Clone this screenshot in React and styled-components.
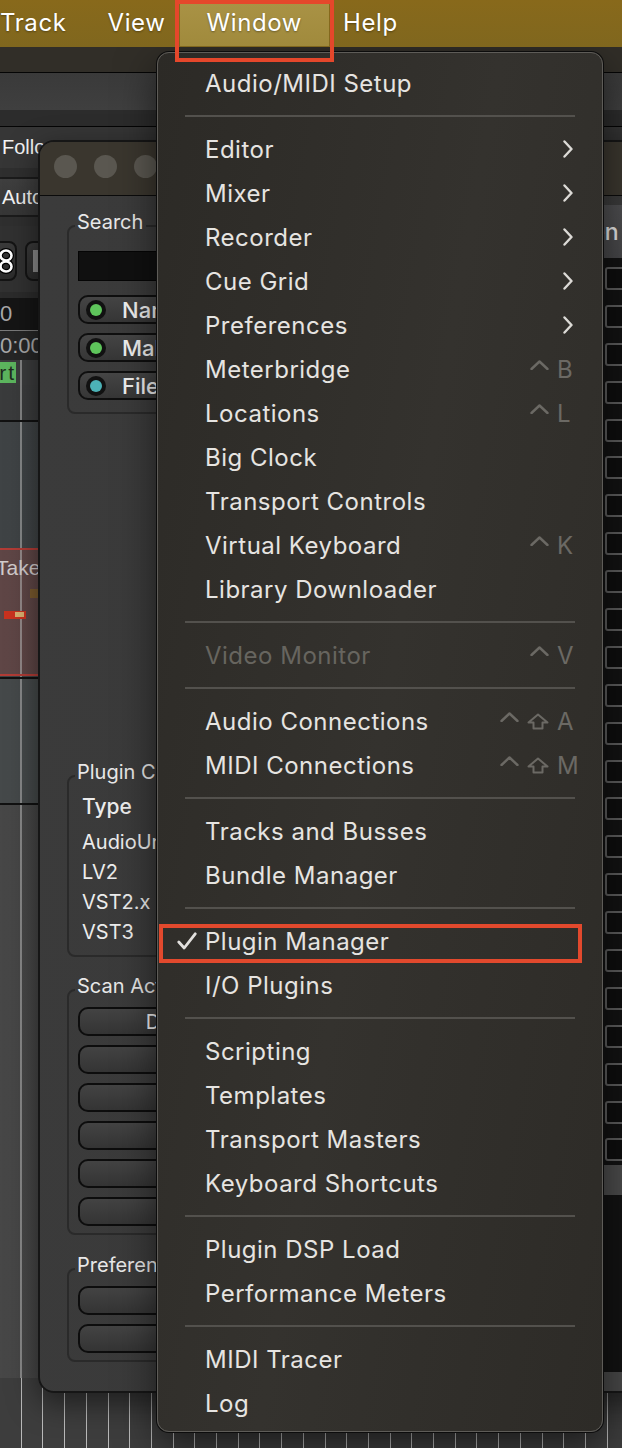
import React from 'react';
import styled, { createGlobalStyle, css } from 'styled-components';

const FONT = `Inter, "Noto Sans", "Liberation Sans", sans-serif`;
const GTK = `"Liberation Sans", Arial, sans-serif`;

const Global = createGlobalStyle`
  html, body { margin: 0; padding: 0; background: #2b2a28; }
  body { font-family: ${FONT}; -webkit-font-smoothing: antialiased; }
  * { box-sizing: border-box; }
`;

const Screen = styled.div`
  width: 622px;
  height: 1448px;
  position: relative;
  overflow: hidden;
  display: flex;
  flex-direction: column;
  background: #3a3a3a;
`;

/* ---------- macOS menu bar ---------- */
const MenuBar = styled.div`
  height: 47px;
  flex: none;
  display: flex;
  align-items: stretch;
  background: linear-gradient(#88691b, #80671e);
  position: relative;
  z-index: 3;
`;

const MenuTitle = styled.div`
  position: relative;
  display: flex;
  align-items: center;
  padding: 0 20px 3px 21px;
  font-size: 24px;
  letter-spacing: 0.6px;
  color: #fff;
  text-shadow: 0 1px 2px rgba(0, 0, 0, 0.35);
  &:first-child { margin-left: -21px; }
  ${(p) =>
    p.$active &&
    css`
      &::before {
        content: '';
        position: absolute;
        left: -6px;
        right: -7px;
        top: 3px;
        bottom: 1px;
        background: linear-gradient(#a99245, #a08a3c);
        z-index: -1;
      }
      &::after {
        content: '';
        position: absolute;
        left: -11px;
        right: -12px;
        top: 0;
        height: 54px;
        border: 4px solid #e5472b;
      }
    `}
`;

/* ---------- workspace / editor background ---------- */
const Workspace = styled.div`
  flex: 1;
  position: relative;
  display: flex;
  flex-direction: column;
`;

const vline = `linear-gradient(90deg, transparent 20px, rgba(190,190,190,.55) 20px 22px, transparent 22px)`;

const Strip = styled.div`
  flex: none;
  height: ${(p) => p.$h}px;
  background: ${(p) => p.$bg};
  border-bottom: ${(p) => (p.$line ? `${p.$line}px solid #050505` : 'none')};
  display: flex;
  align-items: center;
  overflow: hidden;
  color: #f4f4f4;
`;

const ToolText = styled.span`
  font-family: ${GTK};
  font-size: 20px;
  margin-left: 2px;
  white-space: nowrap;
`;

const AutoButton = styled.div`
  height: 40px;
  margin-left: -8px;
  padding: 0 12px 0 8px;
  display: flex;
  align-items: center;
  border: 2px solid #1b1b1b;
  border-radius: 6px;
  background: linear-gradient(#3f3f3f, #363636);
  font-family: ${GTK};
  font-size: 20px;
  white-space: nowrap;
`;

const ToolRow = styled.div`
  flex: none;
  height: 66px;
  background: #313131;
  display: flex;
  align-items: center;
  gap: 8px;
  padding-top: 4px;
`;

const IconBtn = styled.div`
  height: 40px;
  width: ${(p) => p.$w}px;
  margin-left: ${(p) => p.$ml || 0}px;
  border: 2px solid #141414;
  border-radius: 8px;
  background: linear-gradient(#3a3a3a, #2c2c2c);
  display: flex;
  align-items: center;
  justify-content: ${(p) => p.$justify || 'center'};
  padding: 0 ${(p) => p.$pad ?? 6}px;
  flex: none;
`;

const ClockRow = styled.div`
  flex: none;
  height: ${(p) => p.$h}px;
  background: ${(p) => p.$bg};
  border-top: ${(p) => (p.$top ? `1px solid ${p.$top}` : 'none')};
  color: #a8a8a8;
  font-family: ${GTK};
  font-size: 22px;
  display: flex;
  align-items: center;
  padding-top: ${(p) => p.$pt || 0}px;
  overflow: hidden;
  white-space: nowrap;
`;

const Canvas = styled.div`
  flex: 1;
  display: flex;
  flex-direction: column;
  overflow: hidden;
`;

const MarkerRow = styled.div`
  flex: none;
  height: 25px;
  background: ${vline}, #3b3c3d;
  display: flex;
  align-items: center;
`;

const Chip = styled.div`
  margin-left: -40px;
  width: 56px;
  height: 21px;
  background: #5cb55e;
  color: #1f2a1f;
  font-family: ${GTK};
  font-size: 21px;
  line-height: 21px;
  letter-spacing: 2px;
  text-align: right;
  padding-right: 0;
  overflow: hidden;
`;

const Track = styled.div`
  flex: ${(p) => (p.$grow ? 1 : 'none')};
  height: ${(p) => (p.$h ? `${p.$h}px` : 'auto')};
  background: ${vline}, ${(p) => p.$bg};
  border-bottom: ${(p) => (p.$line ? '2px solid #111' : 'none')};
  padding-top: ${(p) => p.$pt || 0}px;
  display: flex;
  flex-direction: column;
`;

const Region = styled.div`
  height: 128px;
  border-top: 2px solid #b23c36;
  border-bottom: 2px solid #b23c36;
  background: ${vline}, linear-gradient(90deg, #5f4646, #4e3d3d);
  display: flex;
  flex-direction: column;
  overflow: hidden;
`;

const RegionName = styled.div`
  margin: 6px 0 0 -4px;
  font-family: ${GTK};
  font-size: 21px;
  line-height: 24px;
  color: #d2cccc;
`;

const Stripes = styled.div`
  flex: none;
  height: 70px;
  background: repeating-linear-gradient(90deg, transparent 0 20.7px, #b9b9b9 20.7px 21.7px), #3d3d3d;
`;

/* ---------- Plugin manager dialog ---------- */
const Dialog = styled.section`
  position: absolute;
  left: 38px;
  top: 93px;
  width: 680px;
  height: 1253px;
  border: 2px solid #161616;
  border-radius: 16px;
  overflow: hidden;
  display: flex;
  flex-direction: column;
  background: linear-gradient(100deg, #3b3b3b, #3a3a3a 60%, #383838);
  box-shadow: 0 10px 30px rgba(0, 0, 0, 0.5);
  z-index: 1;
`;

const TitleBar = styled.div`
  height: 54px;
  flex: none;
  background: #3a362e;
  border-bottom: 1px solid #0b0b0b;
  display: flex;
  align-items: center;
  gap: 17px;
  padding: 0 0 5px 14px;
`;

const Light = styled.span`
  width: 23px;
  height: 23px;
  border-radius: 50%;
  background: #5a5750;
`;

const DialogBody = styled.div`
  flex: 1;
  display: grid;
  grid-template-columns: 500px 1fr;
  min-height: 0;
`;

const LeftPanel = styled.div`
  padding: 14px 0 0 27px;
  display: flex;
  flex-direction: column;
`;

const Frame = styled.fieldset`
  margin: ${(p) => p.$mt || 0}px 0 0;
  padding: ${(p) => p.$pt}px 0 ${(p) => p.$pb}px 9px;
  border: 2px solid #2a2a2a;
  border-radius: 8px;
  width: 470px;
  min-inline-size: 0;
  display: flex;
  flex-direction: column;
`;

const Legend = styled.legend`
  margin-left: -3px;
  padding: 0 3px 8px 2px;
  font-size: 20px;
  line-height: 24px;
  color: #e8e8e8;
`;

const SearchInput = styled.div`
  height: 30px;
  width: 440px;
  background: #101010;
  border: 1px solid #050505;
  margin-bottom: 14px;
`;

const Toggle = styled.div`
  height: 29px;
  width: 440px;
  margin-bottom: ${(p) => (p.$last ? 0 : 9)}px;
  border: 2px solid #0f0f0f;
  border-radius: 10px;
  background: linear-gradient(#454545, #363636);
  display: flex;
  align-items: center;
  padding-left: 6px;
  gap: 16px;
  color: #f0f0f0;
  font-size: 22px;
  font-weight: 500;
`;

const Led = styled.span`
  width: 20px;
  height: 20px;
  border-radius: 50%;
  background: #111;
  display: flex;
  align-items: center;
  justify-content: center;
  flex: none;
  &::after {
    content: '';
    width: 12px;
    height: 12px;
    border-radius: 50%;
    background: ${(p) => p.$color};
  }
`;

const CountHead = styled.div`
  margin: 3px 0 8px 4px;
  font-size: 21px;
  font-weight: 500;
  line-height: 24px;
  color: #ececec;
`;

const CountRow = styled.div`
  margin-left: 4px;
  font-size: 20px;
  line-height: 30px;
  color: #ececec;
`;

const PanelButton = styled.div`
  height: 29px;
  width: ${(p) => p.$w || 440}px;
  margin-bottom: ${(p) => (p.$last ? 0 : 9)}px;
  border: 2px solid #0d0d0d;
  border-radius: 10px;
  background: linear-gradient(#434343, #343434);
  display: flex;
  align-items: center;
  justify-content: center;
  color: #f0f0f0;
  font-size: 20px;
  white-space: nowrap;
`;

const RightPanel = styled.div`
  padding-top: 9px;
  display: flex;
  flex-direction: column;
  min-height: 0;
`;

const TableHead = styled.div`
  height: 53px;
  flex: none;
  background: linear-gradient(#4d4d4f, #464648);
  display: flex;
  align-items: center;
  padding-left: 0;
  font-size: 23px;
  font-weight: 500;
  color: #e2e2e2;
  white-space: nowrap;
`;

const TableBody = styled.div`
  height: 907px;
  flex: none;
  background: #121212;
  overflow: hidden;
`;

const TableRow = styled.div`
  height: 37.9px;
  padding: 9px 0 0 65px;
`;

const CheckBox = styled.div`
  width: 26px;
  height: 23px;
  border: 2px solid #5b5b5b;
  border-radius: 3px;
  background: #0e0e0e;
`;

const Footer = styled.div`
  height: ${(p) => p.$h}px;
  flex: ${(p) => (p.$grow ? 1 : 'none')};
  background: ${(p) => p.$bg};
`;

/* ---------- Window menu ---------- */
const Menu = styled.nav`
  position: absolute;
  left: 157px;
  top: 5px;
  width: 446px;
  height: 1380px;
  border-radius: 12px;
  border: 1px solid #5e5c58;
  box-shadow: 0 0 0 1px #0c0c0c, 0 14px 40px rgba(0, 0, 0, 0.55);
  background: linear-gradient(100deg, #2c2a26 0%, #34322e 50%, #2d2b27 100%);
  padding: 8px 0 6px;
  display: flex;
  flex-direction: column;
  z-index: 2;
`;

const Item = styled.div`
  position: relative;
  height: 44px;
  flex: none;
  display: flex;
  align-items: center;
  padding-right: 23px;
  font-size: 24px;
  letter-spacing: 0.5px;
  color: ${(p) => (p.$disabled ? '#67655f' : '#e6e4e1')};
  white-space: nowrap;
  ${(p) =>
    p.$marked &&
    css`
      &::after {
        content: '';
        position: absolute;
        left: 1px;
        right: 20px;
        top: 5px;
        bottom: 0;
        border: 4px solid #e2492d;
      }
    `}
`;

const CheckSlot = styled.span`
  width: 47px;
  flex: none;
  display: flex;
  align-items: center;
  padding-left: 19px;
`;

const ItemLabel = styled.span`
  flex: 1;
`;

const Shortcut = styled.span`
  display: flex;
  align-items: center;
  gap: 8px;
  color: #6b6964;
`;

const KeyLetter = styled.span`
  min-width: 22px;
  font-size: 24px;
  letter-spacing: 0;
`;

const Caret = styled.svg`
  margin-bottom: 9px;
`;

const Separator = styled.div`
  height: 22px;
  flex: none;
  display: flex;
  align-items: center;
  padding: 0 27px;
  &::after {
    content: '';
    flex: 1;
    height: 2px;
    background: #53514d;
  }
`;

const CaretIcon = () => (
  <Caret width="19" height="10" viewBox="0 0 19 10" fill="none">
    <path d="M1.5 9 L9.5 1.5 L17.5 9" stroke="currentColor" strokeWidth="2.4" strokeLinecap="round" strokeLinejoin="round" />
  </Caret>
);

const ShiftIcon = () => (
  <svg width="22" height="17" viewBox="0 0 22 17" fill="none">
    <path d="M11 1.5 L20.5 9.5 L15.5 9.5 L15.5 15.5 L6.5 15.5 L6.5 9.5 L1.5 9.5 Z" stroke="currentColor" strokeWidth="2" strokeLinejoin="round" />
  </svg>
);

const Chevron = () => (
  <svg width="10" height="18" viewBox="0 0 10 18" fill="none" style={{ marginRight: 6 }}>
    <path d="M1.5 1.5 L8.5 9 L1.5 16.5" stroke="#dcdad6" strokeWidth="2.4" strokeLinecap="round" strokeLinejoin="round" />
  </svg>
);

const CheckMark = () => (
  <svg width="20" height="18" viewBox="0 0 20 18" fill="none">
    <path d="M1.8 10 L7.2 16 L18.2 1.8" stroke="#e2e0dd" strokeWidth="2.8" strokeLinecap="round" strokeLinejoin="round" />
  </svg>
);

const MENU = [
  { label: 'Audio/MIDI Setup' },
  'sep',
  { label: 'Editor', sub: true },
  { label: 'Mixer', sub: true },
  { label: 'Recorder', sub: true },
  { label: 'Cue Grid', sub: true },
  { label: 'Preferences', sub: true },
  { label: 'Meterbridge', key: 'B' },
  { label: 'Locations', key: 'L' },
  { label: 'Big Clock' },
  { label: 'Transport Controls' },
  { label: 'Virtual Keyboard', key: 'K' },
  { label: 'Library Downloader' },
  'sep',
  { label: 'Video Monitor', key: 'V', disabled: true },
  'sep',
  { label: 'Audio Connections', key: 'A', shift: true },
  { label: 'MIDI Connections', key: 'M', shift: true },
  'sep',
  { label: 'Tracks and Busses' },
  { label: 'Bundle Manager' },
  'sep',
  { label: 'Plugin Manager', checked: true, marked: true },
  { label: 'I/O Plugins' },
  'sep',
  { label: 'Scripting' },
  { label: 'Templates' },
  { label: 'Transport Masters' },
  { label: 'Keyboard Shortcuts' },
  'sep',
  { label: 'Plugin DSP Load' },
  { label: 'Performance Meters' },
  'sep',
  { label: 'MIDI Tracer' },
  { label: 'Log' },
];

export default function App() {
  return (
    <>
      <Global />
      <Screen>
        <MenuBar>
          <MenuTitle>Track</MenuTitle>
          <MenuTitle>View</MenuTitle>
          <MenuTitle $active>Window</MenuTitle>
          <MenuTitle>Help</MenuTitle>
        </MenuBar>

        <Workspace>
          <Strip $h={26} $bg="#312e28" $line={1} />
          <Strip $h={37} $bg="linear-gradient(#3a3a3a, #3f3f3f)" />
          <Strip $h={17} $bg="#2c2c2c" $line={1} />
          <Strip $h={41} $bg="#363636" $line={0}>
            <ToolText>Follow</ToolText>
          </Strip>
          <Strip $h={58} $bg="#2f2f2f">
            <AutoButton>Automation</AutoButton>
          </Strip>
          <ToolRow>
            <IconBtn $w={52} $ml={-35} $justify="flex-end" $pad={1}>
              <svg width="16" height="26" viewBox="0 0 16 26" fill="none">
                <ellipse cx="8" cy="7.5" rx="5.5" ry="5" stroke="#000" strokeWidth="5" />
                <ellipse cx="8" cy="18.5" rx="5.5" ry="5" stroke="#000" strokeWidth="5" />
                <ellipse cx="8" cy="7.5" rx="5.5" ry="5" stroke="#fff" strokeWidth="2.6" />
                <ellipse cx="8" cy="18.5" rx="5.5" ry="5" stroke="#fff" strokeWidth="2.6" />
              </svg>
            </IconBtn>
            <IconBtn $w={40} $justify="flex-start">
              <svg width="6" height="22" viewBox="0 0 6 22">
                <rect x="0" y="0" width="5" height="22" fill="#8a8a8a" />
              </svg>
            </IconBtn>
          </ToolRow>
          <ClockRow $h={38} $pt={6} $bg="linear-gradient(#2b2b2b 0 6px, #151515 6px)">
            <span>0</span>
          </ClockRow>
          <ClockRow $h={30} $bg="#262626" $top="#7a7a7a">
            <span>0:00:00</span>
          </ClockRow>
          <Canvas>
            <MarkerRow>
              <Chip>Start</Chip>
            </MarkerRow>
            <Track $h={37} $bg="linear-gradient(90deg,#3a3b3c,#3e3f40)" $line />
            <Track $h={257} $bg="linear-gradient(90deg,#3f4345,#45494c)" $pt={126} $line>
              <Region>
                <RegionName>Take1</RegionName>
                <svg width="40" height="40" viewBox="0 0 40 40">
                  <rect x="30" y="9" width="8" height="9" fill="#7a5a2e" />
                  <rect x="4" y="31" width="22" height="8" fill="#c9321f" />
                  <rect x="15" y="32" width="9" height="5" fill="#d8b070" />
                </svg>
              </Region>
            </Track>
            <Track $h={126} $bg="linear-gradient(90deg,#45494a,#4a4c4e)" $line />
            <Track $grow $bg="linear-gradient(90deg,#474747,#3d3d3d)" />
            <Stripes />
          </Canvas>

          <Dialog>
            <TitleBar>
              <Light />
              <Light />
              <Light />
            </TitleBar>
            <DialogBody>
              <LeftPanel>
                <Frame $pt={9} $pb={12}>
                  <Legend>Search</Legend>
                  <SearchInput />
                  <Toggle>
                    <Led $color="#5ec55b" />
                    Name
                  </Toggle>
                  <Toggle>
                    <Led $color="#5ec55b" />
                    Maker
                  </Toggle>
                  <Toggle $last>
                    <Led $color="#4cb2b6" />
                    File Path
                  </Toggle>
                </Frame>

                <Frame $mt={346} $pt={0} $pb={8}>
                  <Legend>Plugin Count</Legend>
                  <CountHead>Type</CountHead>
                  <CountRow>AudioUnit</CountRow>
                  <CountRow>LV2</CountRow>
                  <CountRow>VST2.x</CountRow>
                  <CountRow>VST3</CountRow>
                </Frame>

                <Frame $mt={17} $pt={1} $pb={7}>
                  <Legend>Scan Actions</Legend>
                  <PanelButton $w={423}>Discover new/updated Plugins</PanelButton>
                  <PanelButton />
                  <PanelButton />
                  <PanelButton />
                  <PanelButton />
                  <PanelButton $last />
                </Frame>

                <Frame $mt={18} $pt={1} $pb={7}>
                  <Legend>Preferences</Legend>
                  <PanelButton />
                  <PanelButton $last />
                </Frame>
              </LeftPanel>

              <RightPanel>
                <TableHead>Hidden</TableHead>
                <TableBody>
                  {Array.from({ length: 24 }, (_, i) => (
                    <TableRow key={i}>
                      <CheckBox />
                    </TableRow>
                  ))}
                </TableBody>
                <Footer $h={30} $bg="#4a4a4a" />
                <Footer $grow $bg="#121212" />
                <Footer $h={19} $bg="#474747" />
              </RightPanel>
            </DialogBody>
          </Dialog>

          <Menu>
            {MENU.map((m, i) =>
              m === 'sep' ? (
                <Separator key={i} />
              ) : (
                <Item key={i} $disabled={m.disabled} $marked={m.marked}>
                  <CheckSlot>{m.checked && <CheckMark />}</CheckSlot>
                  <ItemLabel>{m.label}</ItemLabel>
                  {m.sub && <Chevron />}
                  {m.key && (
                    <Shortcut>
                      <CaretIcon />
                      {m.shift && <ShiftIcon />}
                      <KeyLetter>{m.key}</KeyLetter>
                    </Shortcut>
                  )}
                </Item>
              )
            )}
          </Menu>
        </Workspace>
      </Screen>
    </>
  );
}
